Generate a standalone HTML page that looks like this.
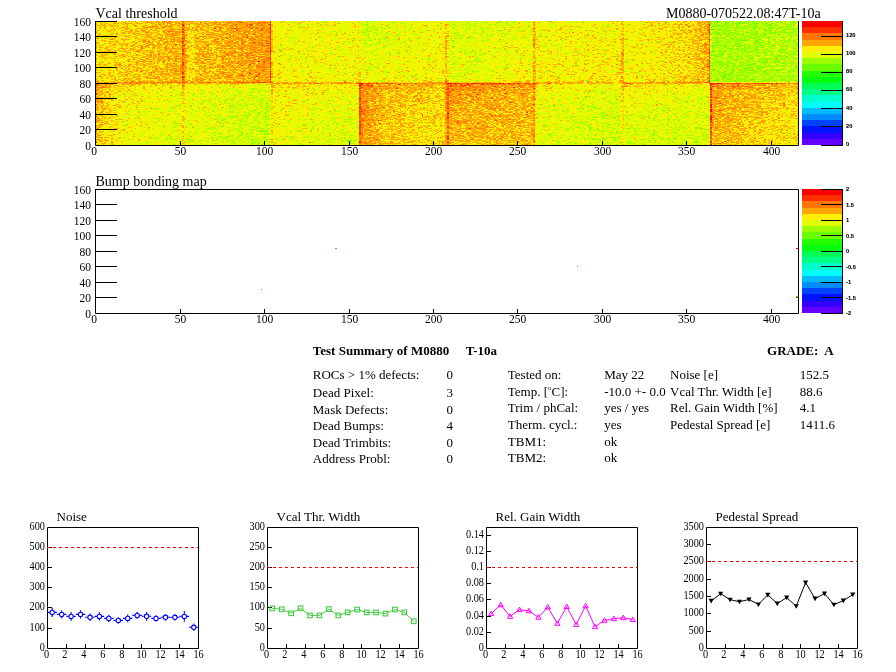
<!DOCTYPE html>
<html><head><meta charset="utf-8"><style>
html,body{margin:0;padding:0;background:#fff}
body{width:896px;height:672px;position:relative;overflow:hidden}
svg{position:absolute;left:0;top:0}
text{font-family:"Liberation Serif",serif;fill:#000}
#hm{position:absolute;left:96px;top:21px;width:702px;height:124px}
i{position:absolute;display:block}
</style></head><body>
<i style="left:96px;top:21px;width:22px;height:16px;background:#fcd700"></i><i style="left:118px;top:21px;width:22px;height:16px;background:#fcd200"></i><i style="left:140px;top:21px;width:22px;height:16px;background:#fec400"></i><i style="left:162px;top:21px;width:22px;height:16px;background:#ffac00"></i><i style="left:184px;top:21px;width:22px;height:16px;background:#fec200"></i><i style="left:206px;top:21px;width:22px;height:16px;background:#ffb600"></i><i style="left:228px;top:21px;width:21px;height:16px;background:#ffa200"></i><i style="left:249px;top:21px;width:22px;height:16px;background:#ff9600"></i><i style="left:271px;top:21px;width:22px;height:16px;background:#f0ef00"></i><i style="left:293px;top:21px;width:22px;height:16px;background:#edf200"></i><i style="left:315px;top:21px;width:22px;height:16px;background:#edef00"></i><i style="left:337px;top:21px;width:22px;height:16px;background:#ebf300"></i><i style="left:359px;top:21px;width:22px;height:16px;background:#d4fc00"></i><i style="left:381px;top:21px;width:22px;height:16px;background:#e0f700"></i><i style="left:403px;top:21px;width:22px;height:16px;background:#e5f700"></i><i style="left:425px;top:21px;width:22px;height:16px;background:#eeef00"></i><i style="left:447px;top:21px;width:22px;height:16px;background:#dbf800"></i><i style="left:469px;top:21px;width:22px;height:16px;background:#d8fb00"></i><i style="left:491px;top:21px;width:22px;height:16px;background:#ddf800"></i><i style="left:513px;top:21px;width:22px;height:16px;background:#e7f000"></i><i style="left:535px;top:21px;width:22px;height:16px;background:#ebf000"></i><i style="left:557px;top:21px;width:22px;height:16px;background:#f1ee00"></i><i style="left:579px;top:21px;width:22px;height:16px;background:#f0f000"></i><i style="left:601px;top:21px;width:22px;height:16px;background:#f1ed00"></i><i style="left:623px;top:21px;width:22px;height:16px;background:#f4eb00"></i><i style="left:645px;top:21px;width:22px;height:16px;background:#f7e200"></i><i style="left:667px;top:21px;width:21px;height:16px;background:#f9da00"></i><i style="left:688px;top:21px;width:22px;height:16px;background:#febd00"></i><i style="left:710px;top:21px;width:22px;height:16px;background:#a8ff00"></i><i style="left:732px;top:21px;width:22px;height:16px;background:#abff00"></i><i style="left:754px;top:21px;width:22px;height:16px;background:#aaff00"></i><i style="left:776px;top:21px;width:22px;height:16px;background:#b2fe00"></i><i style="left:96px;top:37px;width:22px;height:15px;background:#fbd400"></i><i style="left:118px;top:37px;width:22px;height:15px;background:#fbd000"></i><i style="left:140px;top:37px;width:22px;height:15px;background:#fdc000"></i><i style="left:162px;top:37px;width:22px;height:15px;background:#feb000"></i><i style="left:184px;top:37px;width:22px;height:15px;background:#fcc500"></i><i style="left:206px;top:37px;width:22px;height:15px;background:#feba00"></i><i style="left:228px;top:37px;width:21px;height:15px;background:#ffac00"></i><i style="left:249px;top:37px;width:22px;height:15px;background:#ff9400"></i><i style="left:271px;top:37px;width:22px;height:15px;background:#eeec00"></i><i style="left:293px;top:37px;width:22px;height:15px;background:#ecf200"></i><i style="left:315px;top:37px;width:22px;height:15px;background:#f1f100"></i><i style="left:337px;top:37px;width:22px;height:15px;background:#ecf100"></i><i style="left:359px;top:37px;width:22px;height:15px;background:#dcfa00"></i><i style="left:381px;top:37px;width:22px;height:15px;background:#e3f700"></i><i style="left:403px;top:37px;width:22px;height:15px;background:#e6f500"></i><i style="left:425px;top:37px;width:22px;height:15px;background:#f0eb00"></i><i style="left:447px;top:37px;width:22px;height:15px;background:#dff700"></i><i style="left:469px;top:37px;width:22px;height:15px;background:#e2f800"></i><i style="left:491px;top:37px;width:22px;height:15px;background:#eaf300"></i><i style="left:513px;top:37px;width:22px;height:15px;background:#eaed00"></i><i style="left:535px;top:37px;width:22px;height:15px;background:#ecee00"></i><i style="left:557px;top:37px;width:22px;height:15px;background:#f0ef00"></i><i style="left:579px;top:37px;width:22px;height:15px;background:#f1ec00"></i><i style="left:601px;top:37px;width:22px;height:15px;background:#f5e900"></i><i style="left:623px;top:37px;width:22px;height:15px;background:#f1eb00"></i><i style="left:645px;top:37px;width:22px;height:15px;background:#f6e600"></i><i style="left:667px;top:37px;width:21px;height:15px;background:#f8dd00"></i><i style="left:688px;top:37px;width:22px;height:15px;background:#fec000"></i><i style="left:710px;top:37px;width:22px;height:15px;background:#acff00"></i><i style="left:732px;top:37px;width:22px;height:15px;background:#aaff00"></i><i style="left:754px;top:37px;width:22px;height:15px;background:#aeff00"></i><i style="left:776px;top:37px;width:22px;height:15px;background:#b9fe00"></i><i style="left:96px;top:52px;width:22px;height:15px;background:#f9da00"></i><i style="left:118px;top:52px;width:22px;height:15px;background:#fcd100"></i><i style="left:140px;top:52px;width:22px;height:15px;background:#fec200"></i><i style="left:162px;top:52px;width:22px;height:15px;background:#feb000"></i><i style="left:184px;top:52px;width:22px;height:15px;background:#fdc100"></i><i style="left:206px;top:52px;width:22px;height:15px;background:#ffb800"></i><i style="left:228px;top:52px;width:21px;height:15px;background:#ffa800"></i><i style="left:249px;top:52px;width:22px;height:15px;background:#ff9700"></i><i style="left:271px;top:52px;width:22px;height:15px;background:#efef00"></i><i style="left:293px;top:52px;width:22px;height:15px;background:#edf100"></i><i style="left:315px;top:52px;width:22px;height:15px;background:#efef00"></i><i style="left:337px;top:52px;width:22px;height:15px;background:#eef100"></i><i style="left:359px;top:52px;width:22px;height:15px;background:#e5f600"></i><i style="left:381px;top:52px;width:22px;height:15px;background:#e9f400"></i><i style="left:403px;top:52px;width:22px;height:15px;background:#edf400"></i><i style="left:425px;top:52px;width:22px;height:15px;background:#f1eb00"></i><i style="left:447px;top:52px;width:22px;height:15px;background:#e2f600"></i><i style="left:469px;top:52px;width:22px;height:15px;background:#dff800"></i><i style="left:491px;top:52px;width:22px;height:15px;background:#eaf600"></i><i style="left:513px;top:52px;width:22px;height:15px;background:#eeec00"></i><i style="left:535px;top:52px;width:22px;height:15px;background:#f2ed00"></i><i style="left:557px;top:52px;width:22px;height:15px;background:#f2e900"></i><i style="left:579px;top:52px;width:22px;height:15px;background:#f3eb00"></i><i style="left:601px;top:52px;width:22px;height:15px;background:#f6df00"></i><i style="left:623px;top:52px;width:22px;height:15px;background:#f0ec00"></i><i style="left:645px;top:52px;width:22px;height:15px;background:#f4e800"></i><i style="left:667px;top:52px;width:21px;height:15px;background:#f9e000"></i><i style="left:688px;top:52px;width:22px;height:15px;background:#fdc100"></i><i style="left:710px;top:52px;width:22px;height:15px;background:#aaff00"></i><i style="left:732px;top:52px;width:22px;height:15px;background:#adff00"></i><i style="left:754px;top:52px;width:22px;height:15px;background:#b1fe00"></i><i style="left:776px;top:52px;width:22px;height:15px;background:#b1fe00"></i><i style="left:96px;top:67px;width:22px;height:16px;background:#fcd600"></i><i style="left:118px;top:67px;width:22px;height:16px;background:#fdc600"></i><i style="left:140px;top:67px;width:22px;height:16px;background:#fdc000"></i><i style="left:162px;top:67px;width:22px;height:16px;background:#feac00"></i><i style="left:184px;top:67px;width:22px;height:16px;background:#fdc300"></i><i style="left:206px;top:67px;width:22px;height:16px;background:#ffb900"></i><i style="left:228px;top:67px;width:21px;height:16px;background:#ffaf00"></i><i style="left:249px;top:67px;width:22px;height:16px;background:#ff9800"></i><i style="left:271px;top:67px;width:22px;height:16px;background:#f4e800"></i><i style="left:293px;top:67px;width:22px;height:16px;background:#f2e900"></i><i style="left:315px;top:67px;width:22px;height:16px;background:#efef00"></i><i style="left:337px;top:67px;width:22px;height:16px;background:#eeea00"></i><i style="left:359px;top:67px;width:22px;height:16px;background:#ebf000"></i><i style="left:381px;top:67px;width:22px;height:16px;background:#eced00"></i><i style="left:403px;top:67px;width:22px;height:16px;background:#eeee00"></i><i style="left:425px;top:67px;width:22px;height:16px;background:#f5e100"></i><i style="left:447px;top:67px;width:22px;height:16px;background:#e2f200"></i><i style="left:469px;top:67px;width:22px;height:16px;background:#e5f500"></i><i style="left:491px;top:67px;width:22px;height:16px;background:#edf000"></i><i style="left:513px;top:67px;width:22px;height:16px;background:#f6e100"></i><i style="left:535px;top:67px;width:22px;height:16px;background:#f6e200"></i><i style="left:557px;top:67px;width:22px;height:16px;background:#f3e900"></i><i style="left:579px;top:67px;width:22px;height:16px;background:#f6e300"></i><i style="left:601px;top:67px;width:22px;height:16px;background:#f8de00"></i><i style="left:623px;top:67px;width:22px;height:16px;background:#f2e700"></i><i style="left:645px;top:67px;width:22px;height:16px;background:#f8e000"></i><i style="left:667px;top:67px;width:21px;height:16px;background:#f9d700"></i><i style="left:688px;top:67px;width:22px;height:16px;background:#febf00"></i><i style="left:710px;top:67px;width:22px;height:16px;background:#aefe00"></i><i style="left:732px;top:67px;width:22px;height:16px;background:#abfd00"></i><i style="left:754px;top:67px;width:22px;height:16px;background:#b2fe00"></i><i style="left:776px;top:67px;width:22px;height:16px;background:#b7fd00"></i><i style="left:96px;top:83px;width:22px;height:16px;background:#fcc400"></i><i style="left:118px;top:83px;width:22px;height:16px;background:#f6df00"></i><i style="left:140px;top:83px;width:22px;height:16px;background:#f3e900"></i><i style="left:162px;top:83px;width:22px;height:16px;background:#eee800"></i><i style="left:184px;top:83px;width:22px;height:16px;background:#eeee00"></i><i style="left:206px;top:83px;width:22px;height:16px;background:#e9f200"></i><i style="left:228px;top:83px;width:21px;height:16px;background:#e6f100"></i><i style="left:249px;top:83px;width:22px;height:16px;background:#ddf800"></i><i style="left:271px;top:83px;width:22px;height:16px;background:#f7df00"></i><i style="left:293px;top:83px;width:22px;height:16px;background:#f3e500"></i><i style="left:315px;top:83px;width:22px;height:16px;background:#f0ea00"></i><i style="left:337px;top:83px;width:22px;height:16px;background:#efeb00"></i><i style="left:359px;top:83px;width:22px;height:16px;background:#ff8d00"></i><i style="left:381px;top:83px;width:22px;height:16px;background:#feb600"></i><i style="left:403px;top:83px;width:22px;height:16px;background:#feba00"></i><i style="left:425px;top:83px;width:22px;height:16px;background:#fcc600"></i><i style="left:447px;top:83px;width:22px;height:16px;background:#ff8700"></i><i style="left:469px;top:83px;width:22px;height:16px;background:#ff9800"></i><i style="left:491px;top:83px;width:22px;height:16px;background:#fea100"></i><i style="left:513px;top:83px;width:22px;height:16px;background:#ffa100"></i><i style="left:535px;top:83px;width:22px;height:16px;background:#f1e700"></i><i style="left:557px;top:83px;width:22px;height:16px;background:#eeef00"></i><i style="left:579px;top:83px;width:22px;height:16px;background:#e8f100"></i><i style="left:601px;top:83px;width:22px;height:16px;background:#e4f200"></i><i style="left:623px;top:83px;width:22px;height:16px;background:#f5e200"></i><i style="left:645px;top:83px;width:22px;height:16px;background:#f1eb00"></i><i style="left:667px;top:83px;width:21px;height:16px;background:#edee00"></i><i style="left:688px;top:83px;width:22px;height:16px;background:#e7f300"></i><i style="left:710px;top:83px;width:22px;height:16px;background:#ff9300"></i><i style="left:732px;top:83px;width:22px;height:16px;background:#ffaa00"></i><i style="left:754px;top:83px;width:22px;height:16px;background:#feb600"></i><i style="left:776px;top:83px;width:22px;height:16px;background:#fec400"></i><i style="left:96px;top:99px;width:22px;height:15px;background:#fdd000"></i><i style="left:118px;top:99px;width:22px;height:15px;background:#f2ea00"></i><i style="left:140px;top:99px;width:22px;height:15px;background:#ebf300"></i><i style="left:162px;top:99px;width:22px;height:15px;background:#e7f400"></i><i style="left:184px;top:99px;width:22px;height:15px;background:#e4f500"></i><i style="left:206px;top:99px;width:22px;height:15px;background:#e0f800"></i><i style="left:228px;top:99px;width:21px;height:15px;background:#d5fb00"></i><i style="left:249px;top:99px;width:22px;height:15px;background:#d1fc00"></i><i style="left:271px;top:99px;width:22px;height:15px;background:#f2ec00"></i><i style="left:293px;top:99px;width:22px;height:15px;background:#ebf100"></i><i style="left:315px;top:99px;width:22px;height:15px;background:#e5f500"></i><i style="left:337px;top:99px;width:22px;height:15px;background:#e5f500"></i><i style="left:359px;top:99px;width:22px;height:15px;background:#ff9900"></i><i style="left:381px;top:99px;width:22px;height:15px;background:#fec300"></i><i style="left:403px;top:99px;width:22px;height:15px;background:#fcd000"></i><i style="left:425px;top:99px;width:22px;height:15px;background:#fad500"></i><i style="left:447px;top:99px;width:22px;height:15px;background:#ffa300"></i><i style="left:469px;top:99px;width:22px;height:15px;background:#ffb500"></i><i style="left:491px;top:99px;width:22px;height:15px;background:#feb600"></i><i style="left:513px;top:99px;width:22px;height:15px;background:#feb600"></i><i style="left:535px;top:99px;width:22px;height:15px;background:#e8f300"></i><i style="left:557px;top:99px;width:22px;height:15px;background:#e4f800"></i><i style="left:579px;top:99px;width:22px;height:15px;background:#dbfa00"></i><i style="left:601px;top:99px;width:22px;height:15px;background:#def700"></i><i style="left:623px;top:99px;width:22px;height:15px;background:#ecf300"></i><i style="left:645px;top:99px;width:22px;height:15px;background:#e0f700"></i><i style="left:667px;top:99px;width:21px;height:15px;background:#def800"></i><i style="left:688px;top:99px;width:22px;height:15px;background:#dff900"></i><i style="left:710px;top:99px;width:22px;height:15px;background:#ffa700"></i><i style="left:732px;top:99px;width:22px;height:15px;background:#ffba00"></i><i style="left:754px;top:99px;width:22px;height:15px;background:#fdca00"></i><i style="left:776px;top:99px;width:22px;height:15px;background:#fcd800"></i><i style="left:96px;top:114px;width:22px;height:15px;background:#fbd500"></i><i style="left:118px;top:114px;width:22px;height:15px;background:#ecf100"></i><i style="left:140px;top:114px;width:22px;height:15px;background:#ebf400"></i><i style="left:162px;top:114px;width:22px;height:15px;background:#e6f300"></i><i style="left:184px;top:114px;width:22px;height:15px;background:#e4f700"></i><i style="left:206px;top:114px;width:22px;height:15px;background:#d9f800"></i><i style="left:228px;top:114px;width:21px;height:15px;background:#d1fd00"></i><i style="left:249px;top:114px;width:22px;height:15px;background:#d0fd00"></i><i style="left:271px;top:114px;width:22px;height:15px;background:#eef000"></i><i style="left:293px;top:114px;width:22px;height:15px;background:#e4f700"></i><i style="left:315px;top:114px;width:22px;height:15px;background:#e2f900"></i><i style="left:337px;top:114px;width:22px;height:15px;background:#e0f800"></i><i style="left:359px;top:114px;width:22px;height:15px;background:#ff9f00"></i><i style="left:381px;top:114px;width:22px;height:15px;background:#ffc600"></i><i style="left:403px;top:114px;width:22px;height:15px;background:#fcd600"></i><i style="left:425px;top:114px;width:22px;height:15px;background:#fbd200"></i><i style="left:447px;top:114px;width:22px;height:15px;background:#ffaa00"></i><i style="left:469px;top:114px;width:22px;height:15px;background:#ffb200"></i><i style="left:491px;top:114px;width:22px;height:15px;background:#feb700"></i><i style="left:513px;top:114px;width:22px;height:15px;background:#feb900"></i><i style="left:535px;top:114px;width:22px;height:15px;background:#e6f500"></i><i style="left:557px;top:114px;width:22px;height:15px;background:#def900"></i><i style="left:579px;top:114px;width:22px;height:15px;background:#d9fa00"></i><i style="left:601px;top:114px;width:22px;height:15px;background:#d5fa00"></i><i style="left:623px;top:114px;width:22px;height:15px;background:#def600"></i><i style="left:645px;top:114px;width:22px;height:15px;background:#dcfa00"></i><i style="left:667px;top:114px;width:21px;height:15px;background:#d6fa00"></i><i style="left:688px;top:114px;width:22px;height:15px;background:#dbf900"></i><i style="left:710px;top:114px;width:22px;height:15px;background:#ffa600"></i><i style="left:732px;top:114px;width:22px;height:15px;background:#fdc700"></i><i style="left:754px;top:114px;width:22px;height:15px;background:#fbd400"></i><i style="left:776px;top:114px;width:22px;height:15px;background:#fadd00"></i><i style="left:96px;top:129px;width:22px;height:16px;background:#f9da00"></i><i style="left:118px;top:129px;width:22px;height:16px;background:#ecf200"></i><i style="left:140px;top:129px;width:22px;height:16px;background:#e8f600"></i><i style="left:162px;top:129px;width:22px;height:16px;background:#e3f500"></i><i style="left:184px;top:129px;width:22px;height:16px;background:#e2f800"></i><i style="left:206px;top:129px;width:22px;height:16px;background:#d9fa00"></i><i style="left:228px;top:129px;width:21px;height:16px;background:#d1fd00"></i><i style="left:249px;top:129px;width:22px;height:16px;background:#cafd00"></i><i style="left:271px;top:129px;width:22px;height:16px;background:#ebf100"></i><i style="left:293px;top:129px;width:22px;height:16px;background:#e4f700"></i><i style="left:315px;top:129px;width:22px;height:16px;background:#dff900"></i><i style="left:337px;top:129px;width:22px;height:16px;background:#daf900"></i><i style="left:359px;top:129px;width:22px;height:16px;background:#ffa100"></i><i style="left:381px;top:129px;width:22px;height:16px;background:#fecb00"></i><i style="left:403px;top:129px;width:22px;height:16px;background:#fbd700"></i><i style="left:425px;top:129px;width:22px;height:16px;background:#fbd700"></i><i style="left:447px;top:129px;width:22px;height:16px;background:#feb600"></i><i style="left:469px;top:129px;width:22px;height:16px;background:#fdbd00"></i><i style="left:491px;top:129px;width:22px;height:16px;background:#febe00"></i><i style="left:513px;top:129px;width:22px;height:16px;background:#fdbc00"></i><i style="left:535px;top:129px;width:22px;height:16px;background:#e1f800"></i><i style="left:557px;top:129px;width:22px;height:16px;background:#ddfa00"></i><i style="left:579px;top:129px;width:22px;height:16px;background:#d5fc00"></i><i style="left:601px;top:129px;width:22px;height:16px;background:#d3fb00"></i><i style="left:623px;top:129px;width:22px;height:16px;background:#d9fa00"></i><i style="left:645px;top:129px;width:22px;height:16px;background:#d5fc00"></i><i style="left:667px;top:129px;width:21px;height:16px;background:#d4fc00"></i><i style="left:688px;top:129px;width:22px;height:16px;background:#d4fb00"></i><i style="left:710px;top:129px;width:22px;height:16px;background:#ffb300"></i><i style="left:732px;top:129px;width:22px;height:16px;background:#fdcc00"></i><i style="left:754px;top:129px;width:22px;height:16px;background:#fcd900"></i><i style="left:776px;top:129px;width:22px;height:16px;background:#f8df00"></i>
<canvas id="hm" width="702" height="124"></canvas>
<svg width="896" height="672" viewBox="0 0 896 672">
<rect x="802" y="139" width="40" height="6" fill="rgb(99, 0, 255)" stroke="none" stroke-width="1" />
<rect x="802" y="133" width="40" height="6" fill="rgb(51, 0, 255)" stroke="none" stroke-width="1" />
<rect x="802" y="126" width="40" height="7" fill="rgb(0, 20, 255)" stroke="none" stroke-width="1" />
<rect x="802" y="120" width="40" height="6" fill="rgb(0, 68, 255)" stroke="none" stroke-width="1" />
<rect x="802" y="114" width="40" height="6" fill="rgb(0, 139, 255)" stroke="none" stroke-width="1" />
<rect x="802" y="108" width="40" height="6" fill="rgb(0, 187, 255)" stroke="none" stroke-width="1" />
<rect x="802" y="102" width="40" height="6" fill="rgb(0, 255, 252)" stroke="none" stroke-width="1" />
<rect x="802" y="95" width="40" height="7" fill="rgb(0, 255, 204)" stroke="none" stroke-width="1" />
<rect x="802" y="89" width="40" height="6" fill="rgb(0, 255, 133)" stroke="none" stroke-width="1" />
<rect x="802" y="83" width="40" height="6" fill="rgb(0, 255, 85)" stroke="none" stroke-width="1" />
<rect x="802" y="77" width="40" height="6" fill="rgb(0, 255, 14)" stroke="none" stroke-width="1" />
<rect x="802" y="71" width="40" height="6" fill="rgb(34, 255, 0)" stroke="none" stroke-width="1" />
<rect x="802" y="64" width="40" height="7" fill="rgb(105, 255, 0)" stroke="none" stroke-width="1" />
<rect x="802" y="58" width="40" height="6" fill="rgb(153, 255, 0)" stroke="none" stroke-width="1" />
<rect x="802" y="52" width="40" height="6" fill="rgb(224, 255, 0)" stroke="none" stroke-width="1" />
<rect x="802" y="46" width="40" height="6" fill="rgb(255, 238, 0)" stroke="none" stroke-width="1" />
<rect x="802" y="40" width="40" height="6" fill="rgb(255, 167, 0)" stroke="none" stroke-width="1" />
<rect x="802" y="33" width="40" height="7" fill="rgb(255, 119, 0)" stroke="none" stroke-width="1" />
<rect x="802" y="27" width="40" height="6" fill="rgb(255, 48, 0)" stroke="none" stroke-width="1" />
<rect x="802" y="21" width="40" height="6" fill="rgb(255, 0, 0)" stroke="none" stroke-width="1" />
<path d="M95.5,21V145.5H798.5V21" fill="none" stroke="#000" stroke-width="1"/>
<text x="91.00" y="149.60" font-size="11.5" text-anchor="end" >0</text>
<line x1="95" y1="129.5" x2="117" y2="129.5" stroke="#000" stroke-width="1" />
<text x="91.00" y="133.60" font-size="11.5" text-anchor="end" >20</text>
<line x1="95" y1="114.5" x2="117" y2="114.5" stroke="#000" stroke-width="1" />
<text x="91.00" y="118.60" font-size="11.5" text-anchor="end" >40</text>
<line x1="95" y1="98.5" x2="117" y2="98.5" stroke="#000" stroke-width="1" />
<text x="91.00" y="102.60" font-size="11.5" text-anchor="end" >60</text>
<line x1="95" y1="83.5" x2="117" y2="83.5" stroke="#000" stroke-width="1" />
<text x="91.00" y="87.60" font-size="11.5" text-anchor="end" >80</text>
<line x1="95" y1="67.5" x2="117" y2="67.5" stroke="#000" stroke-width="1" />
<text x="91.00" y="71.60" font-size="11.5" text-anchor="end" >100</text>
<line x1="95" y1="52.5" x2="117" y2="52.5" stroke="#000" stroke-width="1" />
<text x="91.00" y="56.60" font-size="11.5" text-anchor="end" >120</text>
<line x1="95" y1="36.5" x2="117" y2="36.5" stroke="#000" stroke-width="1" />
<text x="91.00" y="40.60" font-size="11.5" text-anchor="end" >140</text>
<line x1="95" y1="21.5" x2="117" y2="21.5" stroke="#000" stroke-width="1" />
<text x="91.00" y="25.60" font-size="11.5" text-anchor="end" >160</text>
<text x="94.00" y="155.00" font-size="11.5" text-anchor="middle" >0</text>
<line x1="180.5" y1="141" x2="180.5" y2="145" stroke="#000" stroke-width="1" />
<text x="180.50" y="155.00" font-size="11.5" text-anchor="middle" >50</text>
<line x1="264.5" y1="141" x2="264.5" y2="145" stroke="#000" stroke-width="1" />
<text x="264.50" y="155.00" font-size="11.5" text-anchor="middle" >100</text>
<line x1="349.5" y1="141" x2="349.5" y2="145" stroke="#000" stroke-width="1" />
<text x="349.50" y="155.00" font-size="11.5" text-anchor="middle" >150</text>
<line x1="433.5" y1="141" x2="433.5" y2="145" stroke="#000" stroke-width="1" />
<text x="433.50" y="155.00" font-size="11.5" text-anchor="middle" >200</text>
<line x1="517.5" y1="141" x2="517.5" y2="145" stroke="#000" stroke-width="1" />
<text x="517.50" y="155.00" font-size="11.5" text-anchor="middle" >250</text>
<line x1="602.5" y1="141" x2="602.5" y2="145" stroke="#000" stroke-width="1" />
<text x="602.50" y="155.00" font-size="11.5" text-anchor="middle" >300</text>
<line x1="686.5" y1="141" x2="686.5" y2="145" stroke="#000" stroke-width="1" />
<text x="686.50" y="155.00" font-size="11.5" text-anchor="middle" >350</text>
<line x1="771.5" y1="141" x2="771.5" y2="145" stroke="#000" stroke-width="1" />
<text x="771.50" y="155.00" font-size="11.5" text-anchor="middle" >400</text>
<text x="95.50" y="17.60" font-size="14" text-anchor="start" >Vcal threshold</text>
<text x="666.00" y="17.60" font-size="14" text-anchor="start" >M0880-070522.08:47T-10a</text>
<line x1="842.5" y1="21" x2="842.5" y2="146" stroke="#000" stroke-width="1" />
<line x1="821" y1="145.5" x2="842" y2="145.5" stroke="#000" stroke-width="1" />
<text x="846.00" y="145.60" font-size="5.7" text-anchor="start" style="font-family:'Liberation Sans',sans-serif;font-weight:bold;stroke:#000;stroke-width:0.1px">0</text>
<line x1="821" y1="126.5" x2="842" y2="126.5" stroke="#000" stroke-width="1" />
<text x="846.00" y="127.55" font-size="5.7" text-anchor="start" style="font-family:'Liberation Sans',sans-serif;font-weight:bold;stroke:#000;stroke-width:0.1px">20</text>
<line x1="821" y1="108.5" x2="842" y2="108.5" stroke="#000" stroke-width="1" />
<text x="846.00" y="109.50" font-size="5.7" text-anchor="start" style="font-family:'Liberation Sans',sans-serif;font-weight:bold;stroke:#000;stroke-width:0.1px">40</text>
<line x1="821" y1="90.5" x2="842" y2="90.5" stroke="#000" stroke-width="1" />
<text x="846.00" y="91.45" font-size="5.7" text-anchor="start" style="font-family:'Liberation Sans',sans-serif;font-weight:bold;stroke:#000;stroke-width:0.1px">60</text>
<line x1="821" y1="72.5" x2="842" y2="72.5" stroke="#000" stroke-width="1" />
<text x="846.00" y="73.40" font-size="5.7" text-anchor="start" style="font-family:'Liberation Sans',sans-serif;font-weight:bold;stroke:#000;stroke-width:0.1px">80</text>
<line x1="821" y1="54.5" x2="842" y2="54.5" stroke="#000" stroke-width="1" />
<text x="846.00" y="55.35" font-size="5.7" text-anchor="start" style="font-family:'Liberation Sans',sans-serif;font-weight:bold;stroke:#000;stroke-width:0.1px">100</text>
<line x1="821" y1="36.5" x2="842" y2="36.5" stroke="#000" stroke-width="1" />
<text x="846.00" y="37.30" font-size="5.7" text-anchor="start" style="font-family:'Liberation Sans',sans-serif;font-weight:bold;stroke:#000;stroke-width:0.1px">120</text>
<rect x="802" y="307" width="40" height="6" fill="rgb(99, 0, 255)" stroke="none" stroke-width="1" />
<rect x="802" y="301" width="40" height="6" fill="rgb(51, 0, 255)" stroke="none" stroke-width="1" />
<rect x="802" y="294" width="40" height="7" fill="rgb(0, 20, 255)" stroke="none" stroke-width="1" />
<rect x="802" y="288" width="40" height="6" fill="rgb(0, 68, 255)" stroke="none" stroke-width="1" />
<rect x="802" y="282" width="40" height="6" fill="rgb(0, 139, 255)" stroke="none" stroke-width="1" />
<rect x="802" y="276" width="40" height="6" fill="rgb(0, 187, 255)" stroke="none" stroke-width="1" />
<rect x="802" y="270" width="40" height="6" fill="rgb(0, 255, 252)" stroke="none" stroke-width="1" />
<rect x="802" y="263" width="40" height="7" fill="rgb(0, 255, 204)" stroke="none" stroke-width="1" />
<rect x="802" y="257" width="40" height="6" fill="rgb(0, 255, 133)" stroke="none" stroke-width="1" />
<rect x="802" y="251" width="40" height="6" fill="rgb(0, 255, 85)" stroke="none" stroke-width="1" />
<rect x="802" y="245" width="40" height="6" fill="rgb(0, 255, 14)" stroke="none" stroke-width="1" />
<rect x="802" y="239" width="40" height="6" fill="rgb(34, 255, 0)" stroke="none" stroke-width="1" />
<rect x="802" y="232" width="40" height="7" fill="rgb(105, 255, 0)" stroke="none" stroke-width="1" />
<rect x="802" y="226" width="40" height="6" fill="rgb(153, 255, 0)" stroke="none" stroke-width="1" />
<rect x="802" y="220" width="40" height="6" fill="rgb(224, 255, 0)" stroke="none" stroke-width="1" />
<rect x="802" y="214" width="40" height="6" fill="rgb(255, 238, 0)" stroke="none" stroke-width="1" />
<rect x="802" y="208" width="40" height="6" fill="rgb(255, 167, 0)" stroke="none" stroke-width="1" />
<rect x="802" y="201" width="40" height="7" fill="rgb(255, 119, 0)" stroke="none" stroke-width="1" />
<rect x="802" y="195" width="40" height="6" fill="rgb(255, 48, 0)" stroke="none" stroke-width="1" />
<rect x="802" y="189" width="40" height="6" fill="rgb(255, 0, 0)" stroke="none" stroke-width="1" />
<path d="M95.5,313.5V189.5H798.5V313.5H95.5" fill="none" stroke="#000" stroke-width="1"/>
<text x="91.00" y="317.60" font-size="11.5" text-anchor="end" >0</text>
<line x1="95" y1="297.5" x2="117" y2="297.5" stroke="#000" stroke-width="1" />
<text x="91.00" y="301.60" font-size="11.5" text-anchor="end" >20</text>
<line x1="95" y1="282.5" x2="117" y2="282.5" stroke="#000" stroke-width="1" />
<text x="91.00" y="286.60" font-size="11.5" text-anchor="end" >40</text>
<line x1="95" y1="266.5" x2="117" y2="266.5" stroke="#000" stroke-width="1" />
<text x="91.00" y="270.60" font-size="11.5" text-anchor="end" >60</text>
<line x1="95" y1="251.5" x2="117" y2="251.5" stroke="#000" stroke-width="1" />
<text x="91.00" y="255.60" font-size="11.5" text-anchor="end" >80</text>
<line x1="95" y1="235.5" x2="117" y2="235.5" stroke="#000" stroke-width="1" />
<text x="91.00" y="239.60" font-size="11.5" text-anchor="end" >100</text>
<line x1="95" y1="220.5" x2="117" y2="220.5" stroke="#000" stroke-width="1" />
<text x="91.00" y="224.60" font-size="11.5" text-anchor="end" >120</text>
<line x1="95" y1="204.5" x2="117" y2="204.5" stroke="#000" stroke-width="1" />
<text x="91.00" y="208.60" font-size="11.5" text-anchor="end" >140</text>
<line x1="95" y1="189.5" x2="117" y2="189.5" stroke="#000" stroke-width="1" />
<text x="91.00" y="193.60" font-size="11.5" text-anchor="end" >160</text>
<text x="94.00" y="323.00" font-size="11.5" text-anchor="middle" >0</text>
<line x1="180.5" y1="309" x2="180.5" y2="313" stroke="#000" stroke-width="1" />
<text x="180.50" y="323.00" font-size="11.5" text-anchor="middle" >50</text>
<line x1="264.5" y1="309" x2="264.5" y2="313" stroke="#000" stroke-width="1" />
<text x="264.50" y="323.00" font-size="11.5" text-anchor="middle" >100</text>
<line x1="349.5" y1="309" x2="349.5" y2="313" stroke="#000" stroke-width="1" />
<text x="349.50" y="323.00" font-size="11.5" text-anchor="middle" >150</text>
<line x1="433.5" y1="309" x2="433.5" y2="313" stroke="#000" stroke-width="1" />
<text x="433.50" y="323.00" font-size="11.5" text-anchor="middle" >200</text>
<line x1="517.5" y1="309" x2="517.5" y2="313" stroke="#000" stroke-width="1" />
<text x="517.50" y="323.00" font-size="11.5" text-anchor="middle" >250</text>
<line x1="602.5" y1="309" x2="602.5" y2="313" stroke="#000" stroke-width="1" />
<text x="602.50" y="323.00" font-size="11.5" text-anchor="middle" >300</text>
<line x1="686.5" y1="309" x2="686.5" y2="313" stroke="#000" stroke-width="1" />
<text x="686.50" y="323.00" font-size="11.5" text-anchor="middle" >350</text>
<line x1="771.5" y1="309" x2="771.5" y2="313" stroke="#000" stroke-width="1" />
<text x="771.50" y="323.00" font-size="11.5" text-anchor="middle" >400</text>
<text x="95.50" y="185.60" font-size="14" text-anchor="start" >Bump bonding map</text>
<line x1="842.5" y1="189" x2="842.5" y2="314" stroke="#000" stroke-width="1" />
<line x1="821" y1="189.5" x2="842" y2="189.5" stroke="#000" stroke-width="1" />
<text x="846.00" y="191.20" font-size="5.7" text-anchor="start" style="font-family:'Liberation Sans',sans-serif;font-weight:bold;stroke:#000;stroke-width:0.1px">2</text>
<line x1="821" y1="204.5" x2="842" y2="204.5" stroke="#000" stroke-width="1" />
<text x="846.00" y="206.80" font-size="5.7" text-anchor="start" style="font-family:'Liberation Sans',sans-serif;font-weight:bold;stroke:#000;stroke-width:0.1px">1.5</text>
<line x1="821" y1="220.5" x2="842" y2="220.5" stroke="#000" stroke-width="1" />
<text x="846.00" y="222.40" font-size="5.7" text-anchor="start" style="font-family:'Liberation Sans',sans-serif;font-weight:bold;stroke:#000;stroke-width:0.1px">1</text>
<line x1="821" y1="235.5" x2="842" y2="235.5" stroke="#000" stroke-width="1" />
<text x="846.00" y="237.80" font-size="5.7" text-anchor="start" style="font-family:'Liberation Sans',sans-serif;font-weight:bold;stroke:#000;stroke-width:0.1px">0.5</text>
<line x1="821" y1="251.5" x2="842" y2="251.5" stroke="#000" stroke-width="1" />
<text x="846.00" y="253.20" font-size="5.7" text-anchor="start" style="font-family:'Liberation Sans',sans-serif;font-weight:bold;stroke:#000;stroke-width:0.1px">0</text>
<line x1="821" y1="266.5" x2="842" y2="266.5" stroke="#000" stroke-width="1" />
<text x="846.00" y="268.60" font-size="5.7" text-anchor="start" style="font-family:'Liberation Sans',sans-serif;font-weight:bold;stroke:#000;stroke-width:0.1px">-0.5</text>
<line x1="821" y1="282.5" x2="842" y2="282.5" stroke="#000" stroke-width="1" />
<text x="846.00" y="284.20" font-size="5.7" text-anchor="start" style="font-family:'Liberation Sans',sans-serif;font-weight:bold;stroke:#000;stroke-width:0.1px">-1</text>
<line x1="821" y1="297.5" x2="842" y2="297.5" stroke="#000" stroke-width="1" />
<text x="846.00" y="299.70" font-size="5.7" text-anchor="start" style="font-family:'Liberation Sans',sans-serif;font-weight:bold;stroke:#000;stroke-width:0.1px">-1.5</text>
<line x1="821" y1="313.5" x2="842" y2="313.5" stroke="#000" stroke-width="1" />
<text x="846.00" y="315.20" font-size="5.7" text-anchor="start" style="font-family:'Liberation Sans',sans-serif;font-weight:bold;stroke:#000;stroke-width:0.1px">-2</text>
<rect x="335" y="248" width="2" height="1" fill="rgb(0,187,255)" stroke="none" stroke-width="1" />
<rect x="261" y="289" width="1" height="1" fill="rgb(0,255,14)" stroke="none" stroke-width="1" />
<rect x="577" y="266" width="1" height="1" fill="rgb(0,187,255)" stroke="none" stroke-width="1" />
<rect x="796" y="248" width="2" height="1" fill="rgb(255,0,0)" stroke="none" stroke-width="1" />
<rect x="796" y="296" width="2" height="1" fill="rgb(34,255,0)" stroke="none" stroke-width="1" />
<rect x="796" y="297" width="2" height="1" fill="rgb(255,0,0)" stroke="none" stroke-width="1" />
<text x="312.80" y="355.20" font-size="13" text-anchor="start" font-weight="bold" >Test Summary of M0880</text>
<text x="465.70" y="355.20" font-size="13" text-anchor="start" font-weight="bold" >T-10a</text>
<text x="767.10" y="355.20" font-size="13" text-anchor="start" font-weight="bold" >GRADE:&#160; A</text>
<text x="312.80" y="379.20" font-size="13" text-anchor="start" >ROCs &gt; 1% defects:</text>
<text x="453.00" y="379.20" font-size="13" text-anchor="end" >0</text>
<text x="312.80" y="396.50" font-size="13" text-anchor="start" >Dead Pixel:</text>
<text x="453.00" y="396.50" font-size="13" text-anchor="end" >3</text>
<text x="312.80" y="413.50" font-size="13" text-anchor="start" >Mask Defects:</text>
<text x="453.00" y="413.50" font-size="13" text-anchor="end" >0</text>
<text x="312.80" y="430.40" font-size="13" text-anchor="start" >Dead Bumps:</text>
<text x="453.00" y="430.40" font-size="13" text-anchor="end" >4</text>
<text x="312.80" y="446.70" font-size="13" text-anchor="start" >Dead Trimbits:</text>
<text x="453.00" y="446.70" font-size="13" text-anchor="end" >0</text>
<text x="312.80" y="463.20" font-size="13" text-anchor="start" >Address Probl:</text>
<text x="453.00" y="463.20" font-size="13" text-anchor="end" >0</text>
<text x="507.80" y="379.00" font-size="13" text-anchor="start" >Tested on:</text>
<text x="604.20" y="379.00" font-size="13" text-anchor="start" >May 22</text>
<text x="507.80" y="395.50" font-size="13" text-anchor="start" >Temp. [<tspan font-size="7" dy="-6">o</tspan><tspan dy="6">C]:</tspan></text>
<text x="604.20" y="395.50" font-size="13" text-anchor="start" >-10.0 +- 0.0</text>
<text x="507.80" y="411.80" font-size="13" text-anchor="start" >Trim / phCal:</text>
<text x="604.20" y="411.80" font-size="13" text-anchor="start" >yes / yes</text>
<text x="507.80" y="428.50" font-size="13" text-anchor="start" >Therm. cycl.:</text>
<text x="604.20" y="428.50" font-size="13" text-anchor="start" >yes</text>
<text x="507.80" y="445.50" font-size="13" text-anchor="start" >TBM1:</text>
<text x="604.20" y="445.50" font-size="13" text-anchor="start" >ok</text>
<text x="507.80" y="461.80" font-size="13" text-anchor="start" >TBM2:</text>
<text x="604.20" y="461.80" font-size="13" text-anchor="start" >ok</text>
<text x="670.00" y="379.00" font-size="13" text-anchor="start" >Noise [e]</text>
<text x="799.80" y="379.00" font-size="13" text-anchor="start" >152.5</text>
<text x="670.00" y="395.50" font-size="13" text-anchor="start" >Vcal Thr. Width [e]</text>
<text x="799.80" y="395.50" font-size="13" text-anchor="start" >88.6</text>
<text x="670.00" y="411.80" font-size="13" text-anchor="start" >Rel. Gain Width [%]</text>
<text x="799.80" y="411.80" font-size="13" text-anchor="start" >4.1</text>
<text x="670.00" y="428.50" font-size="13" text-anchor="start" >Pedestal Spread [e]</text>
<text x="799.80" y="428.50" font-size="13" text-anchor="start" >1411.6</text>
<text x="56.50" y="520.80" font-size="13" text-anchor="start" >Noise</text>
<path d="M47.5,527.5H198.5V648.5H47.5Z" fill="none" stroke="#000" stroke-width="1"/>
<text transform="translate(45.00,651.30) scale(0.87,1)" font-size="11.8" text-anchor="end" >0</text>
<line x1="47" y1="628.5" x2="52" y2="628.5" stroke="#000" stroke-width="1" />
<text transform="translate(45.00,631.30) scale(0.87,1)" font-size="11.8" text-anchor="end" >100</text>
<line x1="47" y1="607.5" x2="52" y2="607.5" stroke="#000" stroke-width="1" />
<text transform="translate(45.00,610.30) scale(0.87,1)" font-size="11.8" text-anchor="end" >200</text>
<line x1="47" y1="587.5" x2="52" y2="587.5" stroke="#000" stroke-width="1" />
<text transform="translate(45.00,590.30) scale(0.87,1)" font-size="11.8" text-anchor="end" >300</text>
<line x1="47" y1="567.5" x2="52" y2="567.5" stroke="#000" stroke-width="1" />
<text transform="translate(45.00,570.30) scale(0.87,1)" font-size="11.8" text-anchor="end" >400</text>
<line x1="47" y1="547.5" x2="52" y2="547.5" stroke="#000" stroke-width="1" />
<text transform="translate(45.00,550.30) scale(0.87,1)" font-size="11.8" text-anchor="end" >500</text>
<text transform="translate(45.00,530.30) scale(0.87,1)" font-size="11.8" text-anchor="end" >600</text>
<text transform="translate(46.60,658.00) scale(0.87,1)" font-size="11.8" text-anchor="middle" >0</text>
<line x1="66.5" y1="644" x2="66.5" y2="648" stroke="#000" stroke-width="1" />
<text transform="translate(64.80,658.00) scale(0.87,1)" font-size="11.8" text-anchor="middle" >2</text>
<line x1="85.5" y1="644" x2="85.5" y2="648" stroke="#000" stroke-width="1" />
<text transform="translate(83.80,658.00) scale(0.87,1)" font-size="11.8" text-anchor="middle" >4</text>
<line x1="104.5" y1="644" x2="104.5" y2="648" stroke="#000" stroke-width="1" />
<text transform="translate(102.80,658.00) scale(0.87,1)" font-size="11.8" text-anchor="middle" >6</text>
<line x1="123.5" y1="644" x2="123.5" y2="648" stroke="#000" stroke-width="1" />
<text transform="translate(121.80,658.00) scale(0.87,1)" font-size="11.8" text-anchor="middle" >8</text>
<line x1="141.5" y1="644" x2="141.5" y2="648" stroke="#000" stroke-width="1" />
<text transform="translate(141.50,658.00) scale(0.87,1)" font-size="11.8" text-anchor="middle" >10</text>
<line x1="160.5" y1="644" x2="160.5" y2="648" stroke="#000" stroke-width="1" />
<text transform="translate(160.50,658.00) scale(0.87,1)" font-size="11.8" text-anchor="middle" >12</text>
<line x1="179.5" y1="644" x2="179.5" y2="648" stroke="#000" stroke-width="1" />
<text transform="translate(179.50,658.00) scale(0.87,1)" font-size="11.8" text-anchor="middle" >14</text>
<text transform="translate(198.50,658.00) scale(0.87,1)" font-size="11.8" text-anchor="middle" >16</text>
<line x1="47" y1="547.5" x2="198" y2="547.5" stroke="#ff0000" stroke-width="1" stroke-dasharray="3,3"/>
<path d="M47.5,612.4H49.7M54.7,612.4H56.9M52.2,607.7V609.9M52.2,614.9V617.1" stroke="#0000ff" stroke-width="1.1" fill="none"/>
<circle cx="52.2" cy="612.4" r="2.2" fill="none" stroke="#0000ff" stroke-width="1.1"/>
<path d="M56.9,614.4H59.2M64.2,614.4H66.4M61.7,610.2V611.9M61.7,616.9V618.6" stroke="#0000ff" stroke-width="1.1" fill="none"/>
<circle cx="61.7" cy="614.4" r="2.2" fill="none" stroke="#0000ff" stroke-width="1.1"/>
<path d="M66.4,616.4H68.6M73.6,616.4H75.8M71.1,612.0V613.9M71.1,618.9V620.8" stroke="#0000ff" stroke-width="1.1" fill="none"/>
<circle cx="71.1" cy="616.4" r="2.2" fill="none" stroke="#0000ff" stroke-width="1.1"/>
<path d="M75.8,614.4H78.0M83.0,614.4H85.2M80.5,610.2V611.9M80.5,616.9V618.6" stroke="#0000ff" stroke-width="1.1" fill="none"/>
<circle cx="80.5" cy="614.4" r="2.2" fill="none" stroke="#0000ff" stroke-width="1.1"/>
<path d="M85.2,617.3H87.5M92.5,617.3H94.7M90.0,613.5V614.8M90.0,619.8V621.1" stroke="#0000ff" stroke-width="1.1" fill="none"/>
<circle cx="90.0" cy="617.3" r="2.2" fill="none" stroke="#0000ff" stroke-width="1.1"/>
<path d="M94.7,616.4H96.9M101.9,616.4H104.1M99.4,612.2V613.9M99.4,618.9V620.6" stroke="#0000ff" stroke-width="1.1" fill="none"/>
<circle cx="99.4" cy="616.4" r="2.2" fill="none" stroke="#0000ff" stroke-width="1.1"/>
<path d="M104.1,618.4H106.3M111.3,618.4H113.6M108.8,614.8V615.9M108.8,620.9V622.0" stroke="#0000ff" stroke-width="1.1" fill="none"/>
<circle cx="108.8" cy="618.4" r="2.2" fill="none" stroke="#0000ff" stroke-width="1.1"/>
<path d="M113.6,620.4H115.8M120.8,620.4H123.0M118.3,617.3V617.9M118.3,622.9V623.5" stroke="#0000ff" stroke-width="1.1" fill="none"/>
<circle cx="118.3" cy="620.4" r="2.2" fill="none" stroke="#0000ff" stroke-width="1.1"/>
<path d="M123.0,618.4H125.2M130.2,618.4H132.4M127.7,614.6V615.9M127.7,620.9V622.2" stroke="#0000ff" stroke-width="1.1" fill="none"/>
<circle cx="127.7" cy="618.4" r="2.2" fill="none" stroke="#0000ff" stroke-width="1.1"/>
<path d="M132.4,615.4H134.7M139.7,615.4H141.9M137.2,612.0V612.9M137.2,617.9V618.8" stroke="#0000ff" stroke-width="1.1" fill="none"/>
<circle cx="137.2" cy="615.4" r="2.2" fill="none" stroke="#0000ff" stroke-width="1.1"/>
<path d="M141.9,616.3H144.1M149.1,616.3H151.3M146.6,611.9V613.8M146.6,618.8V620.7" stroke="#0000ff" stroke-width="1.1" fill="none"/>
<circle cx="146.6" cy="616.3" r="2.2" fill="none" stroke="#0000ff" stroke-width="1.1"/>
<path d="M151.3,618.4H153.5M158.5,618.4H160.8M156.0,615.2V615.9M156.0,620.9V621.6" stroke="#0000ff" stroke-width="1.1" fill="none"/>
<circle cx="156.0" cy="618.4" r="2.2" fill="none" stroke="#0000ff" stroke-width="1.1"/>
<path d="M160.8,617.3H163.0M168.0,617.3H170.2M165.5,613.9V614.8M165.5,619.8V620.7" stroke="#0000ff" stroke-width="1.1" fill="none"/>
<circle cx="165.5" cy="617.3" r="2.2" fill="none" stroke="#0000ff" stroke-width="1.1"/>
<path d="M170.2,617.3H172.4M177.4,617.3H179.6M174.9,613.9V614.8M174.9,619.8V620.7" stroke="#0000ff" stroke-width="1.1" fill="none"/>
<circle cx="174.9" cy="617.3" r="2.2" fill="none" stroke="#0000ff" stroke-width="1.1"/>
<path d="M179.6,616.4H181.8M186.8,616.4H189.1M184.3,611.0V613.9M184.3,618.9V621.8" stroke="#0000ff" stroke-width="1.1" fill="none"/>
<circle cx="184.3" cy="616.4" r="2.2" fill="none" stroke="#0000ff" stroke-width="1.1"/>
<path d="M189.1,627.3H191.3M196.3,627.3H198.5M193.8,623.5V624.8M193.8,629.8V631.1" stroke="#0000ff" stroke-width="1.1" fill="none"/>
<circle cx="193.8" cy="627.3" r="2.2" fill="none" stroke="#0000ff" stroke-width="1.1"/>
<text x="276.50" y="520.80" font-size="13" text-anchor="start" >Vcal Thr. Width</text>
<path d="M267.5,527.5H418.5V648.5H267.5Z" fill="none" stroke="#000" stroke-width="1"/>
<text transform="translate(265.00,651.30) scale(0.87,1)" font-size="11.8" text-anchor="end" >0</text>
<line x1="267" y1="628.5" x2="272" y2="628.5" stroke="#000" stroke-width="1" />
<text transform="translate(265.00,631.30) scale(0.87,1)" font-size="11.8" text-anchor="end" >50</text>
<line x1="267" y1="607.5" x2="272" y2="607.5" stroke="#000" stroke-width="1" />
<text transform="translate(265.00,610.30) scale(0.87,1)" font-size="11.8" text-anchor="end" >100</text>
<line x1="267" y1="587.5" x2="272" y2="587.5" stroke="#000" stroke-width="1" />
<text transform="translate(265.00,590.30) scale(0.87,1)" font-size="11.8" text-anchor="end" >150</text>
<line x1="267" y1="567.5" x2="272" y2="567.5" stroke="#000" stroke-width="1" />
<text transform="translate(265.00,570.30) scale(0.87,1)" font-size="11.8" text-anchor="end" >200</text>
<line x1="267" y1="547.5" x2="272" y2="547.5" stroke="#000" stroke-width="1" />
<text transform="translate(265.00,550.30) scale(0.87,1)" font-size="11.8" text-anchor="end" >250</text>
<text transform="translate(265.00,530.30) scale(0.87,1)" font-size="11.8" text-anchor="end" >300</text>
<text transform="translate(266.60,658.00) scale(0.87,1)" font-size="11.8" text-anchor="middle" >0</text>
<line x1="286.5" y1="644" x2="286.5" y2="648" stroke="#000" stroke-width="1" />
<text transform="translate(284.80,658.00) scale(0.87,1)" font-size="11.8" text-anchor="middle" >2</text>
<line x1="305.5" y1="644" x2="305.5" y2="648" stroke="#000" stroke-width="1" />
<text transform="translate(303.80,658.00) scale(0.87,1)" font-size="11.8" text-anchor="middle" >4</text>
<line x1="324.5" y1="644" x2="324.5" y2="648" stroke="#000" stroke-width="1" />
<text transform="translate(322.80,658.00) scale(0.87,1)" font-size="11.8" text-anchor="middle" >6</text>
<line x1="343.5" y1="644" x2="343.5" y2="648" stroke="#000" stroke-width="1" />
<text transform="translate(341.80,658.00) scale(0.87,1)" font-size="11.8" text-anchor="middle" >8</text>
<line x1="361.5" y1="644" x2="361.5" y2="648" stroke="#000" stroke-width="1" />
<text transform="translate(361.50,658.00) scale(0.87,1)" font-size="11.8" text-anchor="middle" >10</text>
<line x1="380.5" y1="644" x2="380.5" y2="648" stroke="#000" stroke-width="1" />
<text transform="translate(380.50,658.00) scale(0.87,1)" font-size="11.8" text-anchor="middle" >12</text>
<line x1="399.5" y1="644" x2="399.5" y2="648" stroke="#000" stroke-width="1" />
<text transform="translate(399.50,658.00) scale(0.87,1)" font-size="11.8" text-anchor="middle" >14</text>
<text transform="translate(418.50,658.00) scale(0.87,1)" font-size="11.8" text-anchor="middle" >16</text>
<line x1="267" y1="567.5" x2="418" y2="567.5" stroke="#ff0000" stroke-width="1" stroke-dasharray="3,3"/>
<path d="M272.2,608.4 L281.7,609.3 L291.1,613.3 L300.5,608.2 L310.0,615.4 L319.4,615.4 L328.8,609.1 L338.3,615.4 L347.7,612.4 L357.2,609.5 L366.6,612.4 L376.0,612.4 L385.5,613.6 L394.9,609.5 L404.3,612.4 L413.8,621.3" stroke="#44cc44" stroke-width="1.0" fill="none"/>
<rect x="269.9" y="606.1" width="4.6" height="4.6" fill="none" stroke="#44cc44" stroke-width="1.1"/>
<rect x="279.4" y="607.0" width="4.6" height="4.6" fill="none" stroke="#44cc44" stroke-width="1.1"/>
<rect x="288.8" y="611.0" width="4.6" height="4.6" fill="none" stroke="#44cc44" stroke-width="1.1"/>
<rect x="298.2" y="605.9" width="4.6" height="4.6" fill="none" stroke="#44cc44" stroke-width="1.1"/>
<rect x="307.7" y="613.1" width="4.6" height="4.6" fill="none" stroke="#44cc44" stroke-width="1.1"/>
<rect x="317.1" y="613.1" width="4.6" height="4.6" fill="none" stroke="#44cc44" stroke-width="1.1"/>
<rect x="326.5" y="606.8" width="4.6" height="4.6" fill="none" stroke="#44cc44" stroke-width="1.1"/>
<rect x="336.0" y="613.1" width="4.6" height="4.6" fill="none" stroke="#44cc44" stroke-width="1.1"/>
<rect x="345.4" y="610.1" width="4.6" height="4.6" fill="none" stroke="#44cc44" stroke-width="1.1"/>
<rect x="354.9" y="607.2" width="4.6" height="4.6" fill="none" stroke="#44cc44" stroke-width="1.1"/>
<rect x="364.3" y="610.1" width="4.6" height="4.6" fill="none" stroke="#44cc44" stroke-width="1.1"/>
<rect x="373.7" y="610.1" width="4.6" height="4.6" fill="none" stroke="#44cc44" stroke-width="1.1"/>
<rect x="383.2" y="611.3" width="4.6" height="4.6" fill="none" stroke="#44cc44" stroke-width="1.1"/>
<rect x="392.6" y="607.2" width="4.6" height="4.6" fill="none" stroke="#44cc44" stroke-width="1.1"/>
<rect x="402.0" y="610.1" width="4.6" height="4.6" fill="none" stroke="#44cc44" stroke-width="1.1"/>
<rect x="411.5" y="619.0" width="4.6" height="4.6" fill="none" stroke="#44cc44" stroke-width="1.1"/>
<text x="495.50" y="520.80" font-size="13" text-anchor="start" >Rel. Gain Width</text>
<path d="M486.5,527.5H637.5V648.5H486.5Z" fill="none" stroke="#000" stroke-width="1"/>
<text transform="translate(484.00,651.30) scale(0.87,1)" font-size="11.8" text-anchor="end" >0</text>
<line x1="486" y1="632.5" x2="491" y2="632.5" stroke="#000" stroke-width="1" />
<text transform="translate(484.00,635.30) scale(0.87,1)" font-size="11.8" text-anchor="end" >0.02</text>
<line x1="486" y1="616.5" x2="491" y2="616.5" stroke="#000" stroke-width="1" />
<text transform="translate(484.00,619.30) scale(0.87,1)" font-size="11.8" text-anchor="end" >0.04</text>
<line x1="486" y1="599.5" x2="491" y2="599.5" stroke="#000" stroke-width="1" />
<text transform="translate(484.00,602.30) scale(0.87,1)" font-size="11.8" text-anchor="end" >0.06</text>
<line x1="486" y1="583.5" x2="491" y2="583.5" stroke="#000" stroke-width="1" />
<text transform="translate(484.00,586.30) scale(0.87,1)" font-size="11.8" text-anchor="end" >0.08</text>
<line x1="486" y1="567.5" x2="491" y2="567.5" stroke="#000" stroke-width="1" />
<text transform="translate(484.00,570.30) scale(0.87,1)" font-size="11.8" text-anchor="end" >0.1</text>
<line x1="486" y1="551.5" x2="491" y2="551.5" stroke="#000" stroke-width="1" />
<text transform="translate(484.00,554.30) scale(0.87,1)" font-size="11.8" text-anchor="end" >0.12</text>
<line x1="486" y1="535.5" x2="491" y2="535.5" stroke="#000" stroke-width="1" />
<text transform="translate(484.00,538.30) scale(0.87,1)" font-size="11.8" text-anchor="end" >0.14</text>
<text transform="translate(485.60,658.00) scale(0.87,1)" font-size="11.8" text-anchor="middle" >0</text>
<line x1="505.5" y1="644" x2="505.5" y2="648" stroke="#000" stroke-width="1" />
<text transform="translate(503.80,658.00) scale(0.87,1)" font-size="11.8" text-anchor="middle" >2</text>
<line x1="524.5" y1="644" x2="524.5" y2="648" stroke="#000" stroke-width="1" />
<text transform="translate(522.80,658.00) scale(0.87,1)" font-size="11.8" text-anchor="middle" >4</text>
<line x1="543.5" y1="644" x2="543.5" y2="648" stroke="#000" stroke-width="1" />
<text transform="translate(541.80,658.00) scale(0.87,1)" font-size="11.8" text-anchor="middle" >6</text>
<line x1="562.5" y1="644" x2="562.5" y2="648" stroke="#000" stroke-width="1" />
<text transform="translate(560.80,658.00) scale(0.87,1)" font-size="11.8" text-anchor="middle" >8</text>
<line x1="580.5" y1="644" x2="580.5" y2="648" stroke="#000" stroke-width="1" />
<text transform="translate(580.50,658.00) scale(0.87,1)" font-size="11.8" text-anchor="middle" >10</text>
<line x1="599.5" y1="644" x2="599.5" y2="648" stroke="#000" stroke-width="1" />
<text transform="translate(599.50,658.00) scale(0.87,1)" font-size="11.8" text-anchor="middle" >12</text>
<line x1="618.5" y1="644" x2="618.5" y2="648" stroke="#000" stroke-width="1" />
<text transform="translate(618.50,658.00) scale(0.87,1)" font-size="11.8" text-anchor="middle" >14</text>
<text transform="translate(637.50,658.00) scale(0.87,1)" font-size="11.8" text-anchor="middle" >16</text>
<line x1="486" y1="567.5" x2="637" y2="567.5" stroke="#ff0000" stroke-width="1" stroke-dasharray="3,3"/>
<path d="M491.2,613.8 L500.7,604.8 L510.1,616.4 L519.5,609.7 L529.0,610.9 L538.4,617.3 L547.8,607.1 L557.3,623.4 L566.7,606.6 L576.2,624.5 L585.6,605.9 L595.0,626.7 L604.5,620.4 L613.9,618.7 L623.3,617.8 L632.8,619.6" stroke="#ff00ff" stroke-width="1.0" fill="none"/>
<path d="M491.2,611.1L493.8,615.6H488.6Z" fill="none" stroke="#ff00ff" stroke-width="1.0"/>
<path d="M500.7,602.2L503.3,606.7H498.1Z" fill="none" stroke="#ff00ff" stroke-width="1.0"/>
<path d="M510.1,613.8L512.7,618.3H507.5Z" fill="none" stroke="#ff00ff" stroke-width="1.0"/>
<path d="M519.5,607.1L522.1,611.6H516.9Z" fill="none" stroke="#ff00ff" stroke-width="1.0"/>
<path d="M529.0,608.3L531.6,612.8H526.4Z" fill="none" stroke="#ff00ff" stroke-width="1.0"/>
<path d="M538.4,614.7L541.0,619.2H535.8Z" fill="none" stroke="#ff00ff" stroke-width="1.0"/>
<path d="M547.8,604.5L550.4,609.0H545.2Z" fill="none" stroke="#ff00ff" stroke-width="1.0"/>
<path d="M557.3,620.8L559.9,625.3H554.7Z" fill="none" stroke="#ff00ff" stroke-width="1.0"/>
<path d="M566.7,604.0L569.3,608.5H564.1Z" fill="none" stroke="#ff00ff" stroke-width="1.0"/>
<path d="M576.2,621.9L578.8,626.4H573.6Z" fill="none" stroke="#ff00ff" stroke-width="1.0"/>
<path d="M585.6,603.3L588.2,607.8H583.0Z" fill="none" stroke="#ff00ff" stroke-width="1.0"/>
<path d="M595.0,624.1L597.6,628.6H592.4Z" fill="none" stroke="#ff00ff" stroke-width="1.0"/>
<path d="M604.5,617.8L607.1,622.3H601.9Z" fill="none" stroke="#ff00ff" stroke-width="1.0"/>
<path d="M613.9,616.1L616.5,620.6H611.3Z" fill="none" stroke="#ff00ff" stroke-width="1.0"/>
<path d="M623.3,615.2L625.9,619.7H620.7Z" fill="none" stroke="#ff00ff" stroke-width="1.0"/>
<path d="M632.8,617.0L635.4,621.5H630.2Z" fill="none" stroke="#ff00ff" stroke-width="1.0"/>
<text x="715.50" y="520.80" font-size="13" text-anchor="start" >Pedestal Spread</text>
<path d="M706.5,527.5H857.5V648.5H706.5Z" fill="none" stroke="#000" stroke-width="1"/>
<text transform="translate(704.00,651.30) scale(0.87,1)" font-size="11.8" text-anchor="end" >0</text>
<line x1="706" y1="631.5" x2="711" y2="631.5" stroke="#000" stroke-width="1" />
<text transform="translate(704.00,634.30) scale(0.87,1)" font-size="11.8" text-anchor="end" >500</text>
<line x1="706" y1="613.5" x2="711" y2="613.5" stroke="#000" stroke-width="1" />
<text transform="translate(704.00,616.30) scale(0.87,1)" font-size="11.8" text-anchor="end" >1000</text>
<line x1="706" y1="596.5" x2="711" y2="596.5" stroke="#000" stroke-width="1" />
<text transform="translate(704.00,599.30) scale(0.87,1)" font-size="11.8" text-anchor="end" >1500</text>
<line x1="706" y1="579.5" x2="711" y2="579.5" stroke="#000" stroke-width="1" />
<text transform="translate(704.00,582.30) scale(0.87,1)" font-size="11.8" text-anchor="end" >2000</text>
<line x1="706" y1="561.5" x2="711" y2="561.5" stroke="#000" stroke-width="1" />
<text transform="translate(704.00,564.30) scale(0.87,1)" font-size="11.8" text-anchor="end" >2500</text>
<line x1="706" y1="544.5" x2="711" y2="544.5" stroke="#000" stroke-width="1" />
<text transform="translate(704.00,547.30) scale(0.87,1)" font-size="11.8" text-anchor="end" >3000</text>
<text transform="translate(704.00,530.30) scale(0.87,1)" font-size="11.8" text-anchor="end" >3500</text>
<text transform="translate(705.60,658.00) scale(0.87,1)" font-size="11.8" text-anchor="middle" >0</text>
<line x1="725.5" y1="644" x2="725.5" y2="648" stroke="#000" stroke-width="1" />
<text transform="translate(723.80,658.00) scale(0.87,1)" font-size="11.8" text-anchor="middle" >2</text>
<line x1="744.5" y1="644" x2="744.5" y2="648" stroke="#000" stroke-width="1" />
<text transform="translate(742.80,658.00) scale(0.87,1)" font-size="11.8" text-anchor="middle" >4</text>
<line x1="763.5" y1="644" x2="763.5" y2="648" stroke="#000" stroke-width="1" />
<text transform="translate(761.80,658.00) scale(0.87,1)" font-size="11.8" text-anchor="middle" >6</text>
<line x1="782.5" y1="644" x2="782.5" y2="648" stroke="#000" stroke-width="1" />
<text transform="translate(780.80,658.00) scale(0.87,1)" font-size="11.8" text-anchor="middle" >8</text>
<line x1="800.5" y1="644" x2="800.5" y2="648" stroke="#000" stroke-width="1" />
<text transform="translate(800.50,658.00) scale(0.87,1)" font-size="11.8" text-anchor="middle" >10</text>
<line x1="819.5" y1="644" x2="819.5" y2="648" stroke="#000" stroke-width="1" />
<text transform="translate(819.50,658.00) scale(0.87,1)" font-size="11.8" text-anchor="middle" >12</text>
<line x1="838.5" y1="644" x2="838.5" y2="648" stroke="#000" stroke-width="1" />
<text transform="translate(838.50,658.00) scale(0.87,1)" font-size="11.8" text-anchor="middle" >14</text>
<text transform="translate(857.50,658.00) scale(0.87,1)" font-size="11.8" text-anchor="middle" >16</text>
<line x1="706" y1="561.5" x2="857" y2="561.5" stroke="#ff0000" stroke-width="1" stroke-dasharray="3,3"/>
<path d="M711.2,600.8 L720.7,593.7 L730.1,599.7 L739.5,601.7 L749.0,599.5 L758.4,604.4 L767.8,594.8 L777.3,603.6 L786.7,597.6 L796.2,606.2 L805.6,582.6 L815.0,598.6 L824.5,593.6 L833.9,604.7 L843.3,600.6 L852.8,594.6" stroke="#000" stroke-width="1.0" fill="none"/>
<path d="M708.6,598.8H713.8L711.2,603.4Z" fill="#000"/>
<path d="M718.1,591.7H723.3L720.7,596.3Z" fill="#000"/>
<path d="M727.5,597.7H732.7L730.1,602.3Z" fill="#000"/>
<path d="M736.9,599.7H742.1L739.5,604.3Z" fill="#000"/>
<path d="M746.4,597.5H751.6L749.0,602.1Z" fill="#000"/>
<path d="M755.8,602.4H761.0L758.4,607.0Z" fill="#000"/>
<path d="M765.2,592.8H770.4L767.8,597.4Z" fill="#000"/>
<path d="M774.7,601.6H779.9L777.3,606.2Z" fill="#000"/>
<path d="M784.1,595.6H789.3L786.7,600.2Z" fill="#000"/>
<path d="M793.6,604.2H798.8L796.2,608.8Z" fill="#000"/>
<path d="M803.0,580.6H808.2L805.6,585.2Z" fill="#000"/>
<path d="M812.4,596.6H817.6L815.0,601.2Z" fill="#000"/>
<path d="M821.9,591.6H827.1L824.5,596.2Z" fill="#000"/>
<path d="M831.3,602.7H836.5L833.9,607.3Z" fill="#000"/>
<path d="M840.7,598.6H845.9L843.3,603.2Z" fill="#000"/>
<path d="M850.2,592.6H855.4L852.8,597.2Z" fill="#000"/>
</svg>
<script>
(function(){
var cv=document.getElementById('hm');if(!cv||!cv.getContext)return;
var ctx=cv.getContext('2d');
var pal=[[99,0,255],[51,0,255],[0,20,255],[0,68,255],[0,139,255],[0,187,255],[0,255,252],[0,255,204],[0,255,133],[0,255,85],[0,255,14],[34,255,0],[105,255,0],[153,255,0],[224,255,0],[255,238,0],[255,167,0],[255,119,0],[255,48,0],[255,0,0]];
var s=987654321;function rnd(){s^=s<<13;s^=s>>>17;s^=s<<5;return ((s>>>0)%1000003)/1000003;}
function gauss(){var u=rnd()||1e-6,v=rnd();return Math.sqrt(-2*Math.log(u))*Math.cos(6.2831853*v);}
var T=[[107,112,107,113],[109,115,111,116],[104,104,103,103],[103,105,98,103],[101,105,99,102],[105,106,103,104],[104,108,104,109],[94,95,94,95]];
var Bm=[[105,100,107,102],[101,97,103,99],[103,99,105,102],[111,107,113,108],[111,110,116,112],[101,98,104,100],[99,99,105,101],[112,105,115,108]];
var colT={0:4,51:10,52:8,103:12,104:6,155:5,156:4,207:8,208:8,259:10,260:5,311:7,312:7,363:10,364:2,415:3};
var colB={0:4,51:8,52:5,103:5,104:5,155:4,156:6,207:7,208:8,259:6,260:5,311:7,312:7,363:4,364:12,415:3};
var sig=4.3, zmax=137.4, dz=zmax/20;
var NX=416,NY=160,W=702,H=124;
var img=ctx.createImageData(W,H);var d=img.data;
var val=new Float32Array(NX*NY);
for(var j=0;j<NY;j++){for(var i=0;i<NX;i++){
  var k=Math.floor(i/52), c=i%52, top=j>=80;
  var q=top?T[k]:Bm[k];
  var fx=c/51, fy=top?(j-80)/79:j/79;
  var m=q[0]*(1-fx)*(1-fy)+q[1]*fx*(1-fy)+q[2]*(1-fx)*fy+q[3]*fx*fy;
  var v=m+sig*gauss();
  var e=top?colT[i]:colB[i]; if(e) v+=e;
  if(!top&&(k==0||k==3)&&c<14) v+=5*(1-c/14);
  if(!top&&j>=68) v+=4*(j-68)/11;
  if(top&&j<=83) v+=2*(83-j)/3;
  if(top&&k==1&&c>=2&&c<7) v-=3;
  if(top&&k==6&&c>34) v+=4*(c-34)/17;
  if(j==79||j==80) v+=6;
  val[j*NX+i]=v;
}}
// pixel mapping
var colOf=new Int32Array(W), rowOf=new Int32Array(H);
for(var px=0;px<W;px++){ // px=0 => screen col 96
  var X=96+px; var ii=Math.floor((X+0.5-95.8)/1.6885); if(ii<0)ii=0; if(ii>415)ii=415; colOf[px]=ii; }
for(var py=0;py<H;py++){ var Y=21+py; var jj=Math.floor((145-(Y+0.5))/0.775); if(jj<0)jj=0; if(jj>159)jj=159; rowOf[py]=jj; }
for(var py=0;py<H;py++){
  var j=rowOf[py];
  for(var px=0;px<W;px++){
    var v=val[j*NX+colOf[px]];
    var ci=Math.floor(v/dz); if(ci<0)ci=0; if(ci>19)ci=19;
    var p=pal[ci], o=(py*W+px)*4;
    d[o]=p[0];d[o+1]=p[1];d[o+2]=p[2];d[o+3]=255;
  }
}
ctx.putImageData(img,0,0);
})();

</script>
</body></html>
